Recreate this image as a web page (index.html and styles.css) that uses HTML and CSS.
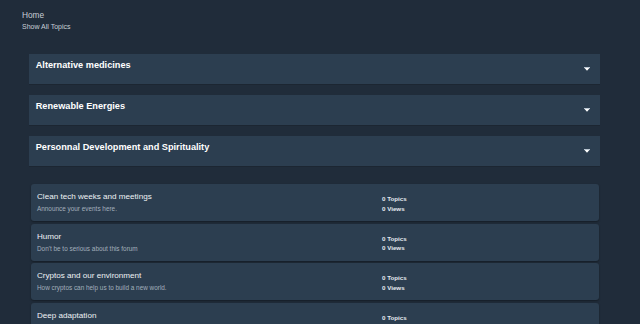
FILE: index.html
```html
<!DOCTYPE html>
<html>
<head>
<meta charset="utf-8">
<link rel="stylesheet" href="styles.css">
</head>
<body>
<div class="crumbs">
  <div class="home">Home</div>
  <div class="all">Show All Topics</div>
</div>
<div class="content">
  <div class="cats">
    <div class="cat"><span class="cat-title">Alternative medicines</span><svg class="caret" width="6" height="4" viewBox="0 0 6 4"><rect x="0" y="0" width="6" height="1" fill="#b8c4d0"/><polygon points="0.5,1 5.5,1 3,3.8" fill="#ffffff"/></svg></div>
    <div class="cat"><span class="cat-title">Renewable Energies</span><svg class="caret" width="6" height="4" viewBox="0 0 6 4"><rect x="0" y="0" width="6" height="1" fill="#b8c4d0"/><polygon points="0.5,1 5.5,1 3,3.8" fill="#ffffff"/></svg></div>
    <div class="cat"><span class="cat-title">Personnal Development and Spirituality</span><svg class="caret" width="6" height="4" viewBox="0 0 6 4"><rect x="0" y="0" width="6" height="1" fill="#b8c4d0"/><polygon points="0.5,1 5.5,1 3,3.8" fill="#ffffff"/></svg></div>
  </div>
  <div class="forums">
    <div class="forum">
      <div class="info"><div class="f-title">Clean tech weeks and meetings</div><div class="f-desc">Announce your events here.</div></div>
      <div class="stats"><div>0 Topics</div><div>0 Views</div></div>
    </div>
    <div class="forum">
      <div class="info"><div class="f-title">Humor</div><div class="f-desc">Don't be to serious about this forum</div></div>
      <div class="stats"><div>0 Topics</div><div>0 Views</div></div>
    </div>
    <div class="forum">
      <div class="info"><div class="f-title">Cryptos and our environment</div><div class="f-desc">How cryptos can help us to build a new world.</div></div>
      <div class="stats"><div>0 Topics</div><div>0 Views</div></div>
    </div>
    <div class="forum">
      <div class="info"><div class="f-title">Deep adaptation</div></div>
      <div class="stats"><div>0 Topics</div></div>
    </div>
  </div>
</div>
</body>
</html>
```
FILE: styles.css
```css
html, body {
  margin: 0;
  padding: 0;
  background: #202c3a;
  font-family: "Liberation Sans", Arial, sans-serif;
  overflow: hidden;
}
.crumbs {
  padding: 10px 0 0 22px;
  color: #c8cfd7;
}
.home {
  font-size: 8.3px;
  line-height: 10px;
}
.all {
  font-size: 7px;
  line-height: 14px;
}
.content {
  width: 570.7px;
  margin: 19.5px 0 0 29.3px;
}
.cats {
  display: flex;
  flex-direction: column;
  gap: 10.9px;
}
.cat {
  height: 30.4px;
  background: #2c3e50;
  box-sizing: border-box;
  padding: 6px 10px 0 6.4px;
  display: flex;
  justify-content: space-between;
  box-shadow: 0 1px 0 rgba(0,0,0,0.12);
}
.cat-title {
  color: #ffffff;
  font-weight: bold;
  font-size: 9.2px;
  line-height: 10px;
}
.caret {
  align-self: center;
  margin-top: -6px;
  display: block;
}
.forums {
  margin: 17.5px 1px 0 1.7px;
  display: flex;
  flex-direction: column;
  gap: 2.7px;
}
.forum {
  height: 37px;
  background: #2c3e50;
  border-radius: 3px;
  box-shadow: 0 1px 2px rgba(0,0,0,0.35);
  display: flex;
  align-items: flex-start;
  box-sizing: border-box;
  padding: 8px 0 0 6px;
}
.info {
  width: 345px;
}
.f-title {
  color: #eef2f5;
  font-size: 8.1px;
  line-height: 10px;
}
.f-desc {
  color: #a3afbc;
  font-size: 6.4px;
  line-height: 8px;
  margin-top: 3px;
}
.stats {
  color: #e6ebf0;
  font-weight: bold;
  font-size: 6.2px;
  line-height: 9.7px;
  padding-top: 2px;
}
```
